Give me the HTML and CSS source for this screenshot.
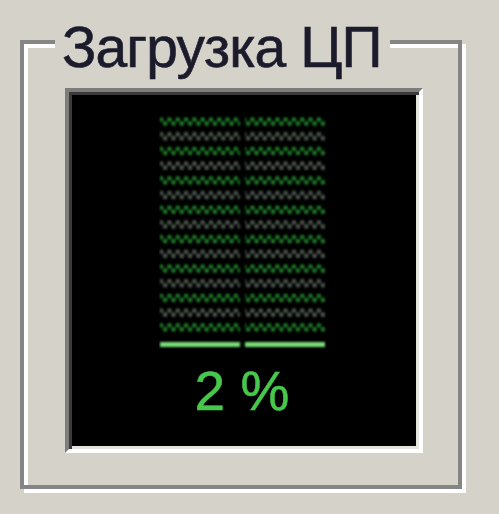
FILE: index.html
```html
<!DOCTYPE html>
<html>
<head>
<meta charset="utf-8">
<link rel="stylesheet" href="styles.css">
</head>
<body>
<div class="group">
  <span class="legend">Загрузка ЦП</span>
  <div class="panel">
    <svg class="meter" width="167" height="235" viewBox="0 0 167 235">
      <defs>
        <pattern id="dots" patternUnits="userSpaceOnUse" width="8.3" height="29.4">
          <circle cx="2.1" cy="4.5" r="2.4" fill="#1e7828"/>
          <circle cx="6.25" cy="8.5" r="2.4" fill="#1e7828"/>
          <circle cx="2.1" cy="19.2" r="2.4" fill="#4b554d"/>
          <circle cx="6.25" cy="23.2" r="2.4" fill="#4b554d"/>
        </pattern>
        <filter id="soft" x="-5%" y="-5%" width="110%" height="110%"><feGaussianBlur stdDeviation="1.2"/></filter>
      </defs>
      <g filter="url(#soft)">
        <rect x="1" y="0" width="80" height="221" fill="url(#dots)"/>
        <rect x="86" y="0" width="80" height="221" fill="url(#dots)"/>
        <rect x="1" y="227" width="80" height="5" fill="#74dc74"/>
        <rect x="86" y="227" width="80" height="5" fill="#74dc74"/>
      </g>
    </svg>
    <div class="value">2 %</div>
  </div>
</div>
</body>
</html>
```
FILE: styles.css
```css
html, body {
  margin: 0;
  padding: 0;
  background: #d5d2ca;
  width: 499px;
  height: 514px;
  overflow: hidden;
}
body {
  padding-top: 40px;
  padding-left: 20px;
  box-sizing: border-box;
}
.group {
  position: relative;
  width: 442px;
  height: 449px;
  box-sizing: border-box;
  border: 4px solid #858585;
  box-shadow: inset 4px 4px 0 #ffffff, 4px 4px 0 #ffffff;
  padding: 44px 0 0 41px;
}
.legend {
  position: absolute;
  left: 31px;
  top: -19px;
  background: #d5d2ca;
  padding: 0 8px 0 7px;
  font-family: "Liberation Sans", Arial, sans-serif;
  font-size: 57px;
  letter-spacing: -0.9px;
  line-height: 44px;
  height: 46px;
  color: #1c1b2b;
  -webkit-text-stroke: 0.6px #1c1b2b;
  filter: blur(0.6px);
}
.panel {
  width: 358px;
  height: 365px;
  box-sizing: border-box;
  background: #000;
  border-style: solid;
  border-width: 4px;
  border-color: #7d7d7d #ffffff #ffffff #7d7d7d;
  box-shadow: inset 3px 3px 0 #3a3a3a, inset -3px -3px 0 #e6e4df;
  display: flex;
  flex-direction: column;
  align-items: center;
  padding-top: 23px;
  padding-right: 4px;
}
.meter {
  display: block;
}
.value {
  margin-top: 10px;
  font-family: "Liberation Sans", Arial, sans-serif;
  font-size: 55px;
  line-height: 62px;
  color: #46c84c;
  -webkit-text-stroke: 0.5px #46c84c;
  filter: blur(0.6px);
}
```
